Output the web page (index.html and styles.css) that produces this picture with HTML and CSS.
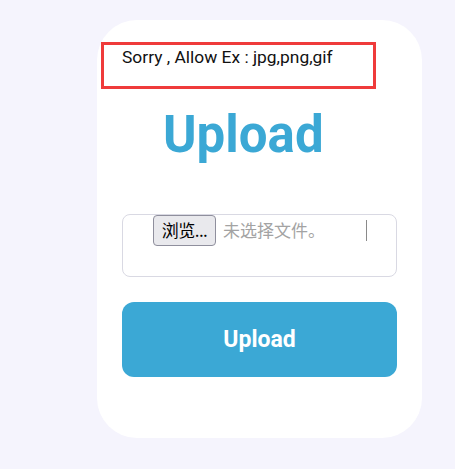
FILE: index.html
```html
<!DOCTYPE html>
<html lang="zh">
<head>
<meta charset="utf-8">
<link rel="stylesheet" href="styles.css">
</head>
<body>
<div class="card">
  <div class="msg">Sorry , Allow Ex : jpg,png,gif</div>
  <h1 class="title">Upload</h1>
  <div class="filebox">
    <span class="filebtn">浏览...</span>
    <span class="filename">未选择文件。</span>
    <span class="caret"></span>
  </div>
  <button class="submit">Upload</button>
</div>
</body>
</html>
```
FILE: styles.css
```css
html, body {
  margin: 0;
  padding: 0;
  background: #f5f4fd;
  font-family: Roboto, "Noto Sans CJK SC", sans-serif;
}
.card {
  margin: 20px 0 0 97px;
  width: 325px;
  height: 418px;
  background: #fff;
  border-radius: 40px;
  box-sizing: border-box;
  padding: 22px 25px 0 4px;
  display: flex;
  flex-direction: column;
}
.msg {
  box-sizing: border-box;
  width: 275px;
  height: 47px;
  border: 3px solid #ef3b3b;
  padding: 2px 0 0 18px;
  font-size: 17.4px;
  line-height: 20px;
  color: #111;
}
.title {
  margin: 20px 0 0 62px;
  font-size: 51px;
  line-height: 1;
  font-weight: 700;
  color: #3ba8d5;
  font-family: Roboto, sans-serif;
}
.filebox {
  margin: 54px 0 0 21px;
  box-sizing: border-box;
  width: 275px;
  height: 63px;
  border: 1px solid #d9d9e3;
  border-radius: 8px;
  display: flex;
  align-items: flex-start;
  padding-left: 30px;
  padding-right: 29px;
}
.filebtn {
  box-sizing: border-box;
  height: 31px;
  width: 63px;
  background: #e9e9ed;
  border: 1px solid #8f8f9d;
  border-radius: 4px;
  font-family: "Noto Sans CJK SC", sans-serif;
  font-size: 17px;
  line-height: 28px;
  text-align: center;
  color: #000;
  white-space: nowrap;
  letter-spacing: -0.5px;
}
.filename {
  margin-left: 7px;
  margin-top: 1px;
  font-family: "Noto Sans CJK SC", sans-serif;
  font-size: 17px;
  line-height: 28px;
  color: #a3a3a3;
}
.caret {
  margin-left: auto;
  margin-top: 5px;
  width: 1px;
  height: 21px;
  background: #8a8a8a;
}
.submit {
  margin: 25px 0 0 21px;
  width: 275px;
  height: 75px;
  border: none;
  border-radius: 12px;
  background: #3ba8d5;
  color: #fff;
  font-family: Roboto, sans-serif;
  font-weight: 700;
  font-size: 23px;
  padding: 0;
}
```
